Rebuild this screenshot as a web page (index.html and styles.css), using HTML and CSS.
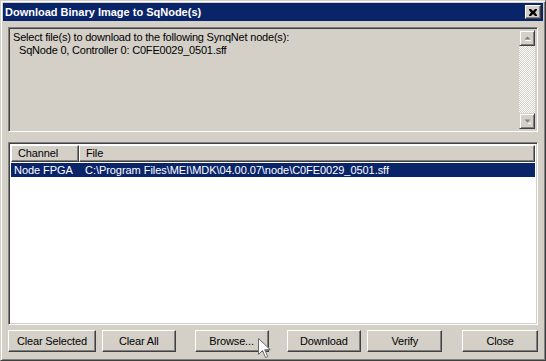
FILE: index.html
```html
<!DOCTYPE html>
<html>
<head>
<meta charset="utf-8">
<link rel="stylesheet" href="styles.css">
</head>
<body>
<div class="window">
  <div class="titlebar">
    <span class="title">Download Binary Image to SqNode(s)</span>
    <span class="closebtn"><svg width="8" height="7" viewBox="0 0 8 7"><path d="M0 0h2l2 2 2-2h2v1l-2 2.5 2 2.5v1h-2l-2-2-2 2h-2v-1l2-2.5-2-2.5z" fill="#000"/></svg></span>
  </div>
  <div class="client">
    <div class="msgbox">
      <div class="msgtext">Select file(s) to download to the following SynqNet node(s):<br><span class="indent">SqNode 0, Controller 0: C0FE0029_0501.sff</span></div>
      <div class="vscroll">
        <div class="sbtn"><svg width="7" height="5" viewBox="0 0 7 5"><path d="M3.5 0.5L0.5 3.5h6z" fill="#808080"/><path d="M1.5 4.5h6" stroke="#fff"/></svg></div>
        <div class="track"></div>
        <div class="sbtn"><svg width="7" height="5" viewBox="0 0 7 5"><path d="M0.5 0.5h6L3.5 3.5z" fill="#808080"/><path d="M4.5 4.5h3" stroke="#fff"/></svg></div>
      </div>
    </div>
    <div class="list">
      <div class="lhead">
        <div class="hcell hc1">Channel</div>
        <div class="hcell hc2">File</div>
      </div>
      <div class="row sel">
        <span class="rc1">Node FPGA</span>
        <span class="rc2">C:\Program Files\MEI\MDK\04.00.07\node\C0FE0029_0501.sff</span>
      </div>
    </div>
    <div class="buttons">
      <div class="btn b1">Clear Selected</div>
      <div class="btn b2">Clear All</div>
      <div class="btn b3">Browse...</div>
      <div class="btn b4">Download</div>
      <div class="btn b5">Verify</div>
      <div class="btn b6">Close</div>
    </div>
  </div>
  <svg class="cursor" width="13" height="21" viewBox="0 0 13 21"><path d="M0.5 0.5v16l4-4 3 7 2.2-1-3-6.8h5.6z" fill="#fff" stroke="#6a6a6a" stroke-width="1"/></svg>
</div>
</body>
</html>
```

FILE: styles.css
```css
html, body {
  margin: 0;
  padding: 0;
  background: #d4d0c8;
}
.window {
  position: relative;
  width: 546px;
  height: 361px;
  box-sizing: border-box;
  border: 1px solid;
  border-color: #d4d0c8 #404040 #404040 #d4d0c8;
  box-shadow: inset 1px 1px #fff, inset -1px -1px #808080;
  padding: 2px 2px 2px 2px;
  background: #d4d0c8;
  display: flex;
  flex-direction: column;
  font-family: "Liberation Sans", Arial, sans-serif;
  font-size: 11px;
  letter-spacing: -0.15px;
  color: #000;
}
.titlebar {
  height: 18px;
  background: #0a246a;
  display: flex;
  align-items: center;
  justify-content: space-between;
  padding: 0 2px 0 2px;
}
.title {
  color: #fff;
  font-weight: bold;
  font-size: 11px;
  letter-spacing: 0;
}
.closebtn {
  width: 16px;
  height: 14px;
  box-sizing: border-box;
  background: #d4d0c8;
  border: 1px solid;
  border-color: #fff #404040 #404040 #fff;
  box-shadow: inset -1px -1px #808080;
  display: flex;
  align-items: center;
  justify-content: center;
}
.client {
  flex: 1;
  display: flex;
  flex-direction: column;
  padding: 6px 5px 6px 5px;
}
.msgbox {
  height: 105px;
  box-sizing: border-box;
  border: 1px solid;
  border-color: #808080 #fff #fff #808080;
  box-shadow: inset 1px 1px #404040, inset -1px -1px #d4d0c8;
  padding: 2px;
  display: flex;
  background: #d4d0c8;
}
.msgtext {
  flex: 1;
  padding: 1px 2px;
  line-height: 13px;
  letter-spacing: -0.2px;
}
.indent {
  padding-left: 6px;
}
.vscroll {
  width: 16px;
  display: flex;
  flex-direction: column;
}
.sbtn {
  height: 16px;
  box-sizing: border-box;
  background: #d4d0c8;
  border: 1px solid;
  border-color: #d4d0c8 #404040 #404040 #d4d0c8;
  box-shadow: inset 1px 1px #fff, inset -1px -1px #808080;
  display: flex;
  align-items: center;
  justify-content: center;
}
.track {
  flex: 1;
  background: repeating-conic-gradient(#fff 0 25%, #d4d0c8 0 50%) 0 0 / 2px 2px;
}
.list {
  margin-top: 10px;
  height: 183px;
  box-sizing: border-box;
  border: 1px solid;
  border-color: #808080 #fff #fff #808080;
  box-shadow: inset 1px 1px #404040, inset -1px -1px #d4d0c8;
  padding: 2px;
  background: #fff;
}
.lhead {
  display: flex;
  height: 17px;
}
.hcell {
  box-sizing: border-box;
  background: #d4d0c8;
  border: 1px solid;
  border-color: #fff #404040 #404040 #fff;
  box-shadow: inset -1px -1px #808080;
  line-height: 15px;
  padding-left: 6px;
}
.hc1 {
  width: 68px;
}
.hc2 {
  flex: 1;
}
.row {
  display: flex;
  height: 14px;
  line-height: 14px;
  margin-top: 1px;
  letter-spacing: -0.05px;
}
.sel {
  background: #0a246a;
  color: #fff;
}
.rc1 {
  width: 71px;
  padding-left: 3px;
}
.buttons {
  margin-top: 5px;
  display: flex;
}
.btn {
  height: 22px;
  box-sizing: border-box;
  background: #d4d0c8;
  border: 1px solid;
  border-color: #fff #404040 #404040 #fff;
  box-shadow: inset -1px -1px #808080;
  display: flex;
  align-items: center;
  justify-content: center;
}
.b1 { width: 88px; }
.b2 { width: 74px; margin-left: 6px; }
.b3 { width: 74px; margin-left: 19px; }
.b4 { width: 75px; margin-left: 18px; }
.b5 { width: 75px; margin-left: 6px; }
.b6 { width: 76px; margin-left: 20px; }
.cursor {
  position: absolute;
  left: 257px;
  top: 337px;
}
```
